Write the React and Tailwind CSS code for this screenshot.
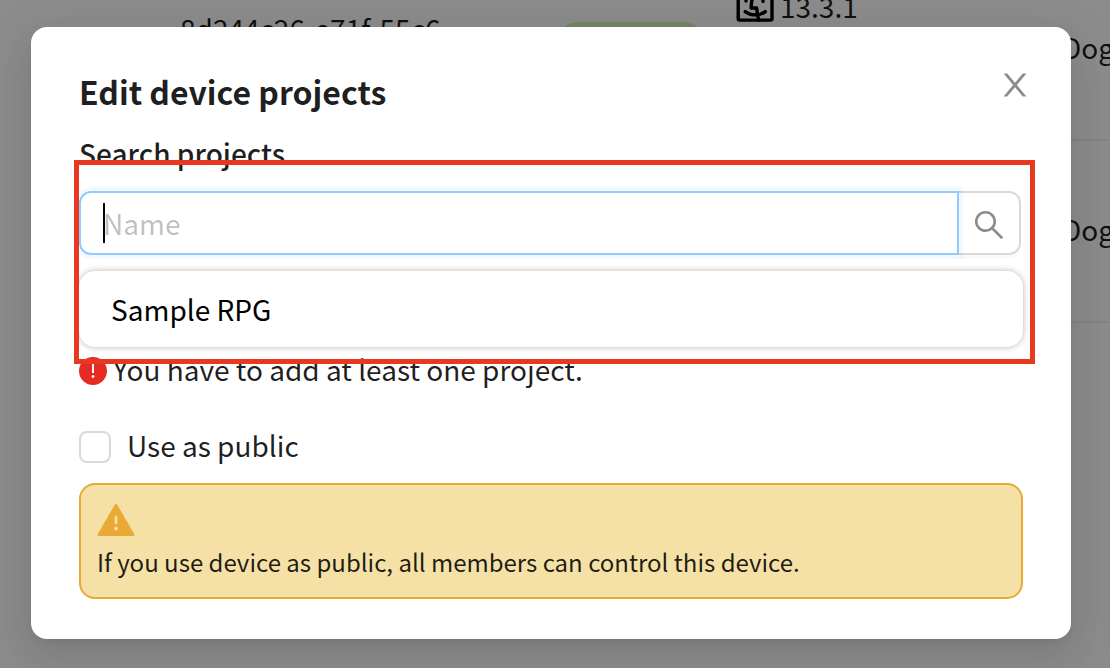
import { AiOutlineSearch, AiFillExclamationCircle, AiFillWarning } from "react-icons/ai";

function FinderIcon() {
  return (
    <svg
      viewBox="0 0 38 38"
      className="size-[38px] shrink-0 text-black"
      fill="none"
      stroke="currentColor"
      strokeWidth="3.4"
      strokeLinecap="round"
      strokeLinejoin="round"
      aria-hidden="true"
    >
      <rect x="2.2" y="1.7" width="33.8" height="34.4" rx="1.5" />
      <path d="M10 11v6M27 11v6.5" />
      <path d="M9.3 27.6c5.4 4.4 14.4 4.4 20 0" />
      <path d="M20.5 2c-3 6-5 13-5.4 22h5.6c.2 5 .8 8 2 12" />
    </svg>
  );
}

function CloseIcon() {
  return (
    <svg viewBox="0 0 1024 1024" className="size-9" fill="currentColor" aria-hidden="true">
      <path d="M563.8 512l262.5-312.9c4.4-5.2.7-13.1-6.1-13.1h-79.8c-4.7 0-9.2 2.1-12.3 5.7L511.6 449.8 295.1 191.7c-3-3.6-7.5-5.7-12.3-5.7H203c-6.8 0-10.5 7.9-6.1 13.1L459.4 512 196.9 824.9A7.95 7.95 0 0 0 203 838h79.8c4.7 0 9.2-2.1 12.3-5.7l216.5-258.1 216.5 258.1c3 3.6 7.5 5.7 12.3 5.7h79.8c6.8 0 10.5-7.9 6.1-13.1L563.8 512z" />
    </svg>
  );
}

function DeviceTable() {
  return (
    <div className="absolute inset-x-0 top-[-42px] overflow-hidden">
      <table className="w-full table-fixed border-collapse text-[28px] leading-[44px] text-black/88">
        <colgroup>
          <col className="w-[164px]" />
          <col className="w-[378px]" />
          <col className="w-[178px]" />
          <col className="w-[326px]" />
          <col />
        </colgroup>
        <tbody>
          <tr className="h-[182px]">
            <td />
            <td className="border-b-2 border-black/6 px-4 pt-12 align-top">8d244c26-e71f-55c6</td>
            <td className="border-b-2 border-black/6 px-4">
              <span className="block h-[54px] rounded-[20px] bg-[#d0f5bd]" />
            </td>
            <td className="border-b-2 border-black/6 px-4 pt-[26px] align-top">
              <span className="flex items-start gap-[6px]">
                <FinderIcon />
                13.3.1
              </span>
            </td>
            <td className="border-b-2 border-black/6 pb-1 pl-4">Dog</td>
          </tr>
          <tr className="h-[182px]">
            <td />
            <td colSpan={3} className="border-b-2 border-black/6" />
            <td className="border-b-2 border-black/6 pb-1 pl-4">Dog</td>
          </tr>
        </tbody>
      </table>
    </div>
  );
}

function ProjectSearch() {
  return (
    <div className="relative mt-4">
      <div className="mr-[2px] flex h-16">
        <div className="relative min-w-0 flex-1">
          <input
            id="project-search"
            type="text"
            placeholder="Name"
            className="h-full w-full rounded-l-[12px] border-2 border-[#91caff] bg-white px-[22px] shadow-[0_0_0_4px_rgba(5,145,255,0.05)] outline-none placeholder:text-black/25"
          />
          <span className="absolute top-3 left-6 h-10 w-[2px] bg-black" />
        </div>
        <button
          type="button"
          aria-label="Search"
          className="flex w-[62px] items-center justify-center rounded-r-[12px] border-2 border-l-0 border-[#d9d9d9] pt-1 text-black/45 shadow-[0_4px_0_rgba(0,0,0,0.02)]"
        >
          <AiOutlineSearch className="size-9" />
        </button>
      </div>
      <ul className="absolute inset-x-0 top-20 h-[76px] rounded-[16px] bg-white shadow-[0_0_6px_rgba(0,0,0,0.3)]">
        <li className="h-full">
          <button type="button" className="flex h-full w-full items-center px-8 text-black">
            Sample RPG
          </button>
        </li>
      </ul>
      <div className="pointer-events-none absolute -top-[31px] -right-3 -left-[5px] h-[204px] border-[5px] border-[#e6391f]" />
    </div>
  );
}

export default function App() {
  return (
    <div
      className="relative min-h-screen overflow-hidden bg-white text-[28px] leading-[44px]"
      style={{ fontFamily: '"Noto Sans CJK KR", "Noto Sans", sans-serif' }}
    >
      <DeviceTable />
      <div className="relative min-h-screen bg-black/45 pt-[27px] pr-[39px] pb-7 pl-[31px]">
        <section
          role="dialog"
          aria-labelledby="dialog-title"
          className="rounded-[16px] bg-white px-12 py-10 text-black/88 shadow-[0_12px_32px_0_rgba(0,0,0,0.08),0_6px_12px_-8px_rgba(0,0,0,0.12),0_18px_56px_16px_rgba(0,0,0,0.05)]"
        >
          <header className="flex h-12 items-start justify-between">
            <h1 id="dialog-title" className="text-[32px] leading-[48px] font-bold">
              Edit device projects
            </h1>
            <button type="button" aria-label="Close" className="-mr-[10px] text-black/45">
              <CloseIcon />
            </button>
          </header>
          <label htmlFor="project-search" className="mt-4 block font-medium">
            Search projects
          </label>
          <ProjectSearch />
          <p className="mt-[94px] flex items-center gap-1">
            <AiFillExclamationCircle className="-ml-[2px] size-8 shrink-0 text-[#e62c22]" />
            <span className="pb-1 leading-[40px]">You have to add at least one project.</span>
          </p>
          <label className="mt-8 flex items-center gap-4">
            <input
              type="checkbox"
              className="size-8 shrink-0 appearance-none rounded-[8px] border-2 border-[#d9d9d9] bg-white"
            />
            <span className="pb-1 leading-[40px]">Use as public</span>
          </label>
          <div className="mt-[14px] rounded-[16px] border-2 border-[#e9a935] bg-[#f5e0a5] px-4 pt-[14px] pb-4 text-[24px] leading-[38px]">
            <AiFillWarning className="-ml-[2px] size-[42px] text-[#e9a935]" />
            <p className="mt-[2px]">
              If you use device as public, all members can control this device.
            </p>
          </div>
        </section>
      </div>
    </div>
  );
}
